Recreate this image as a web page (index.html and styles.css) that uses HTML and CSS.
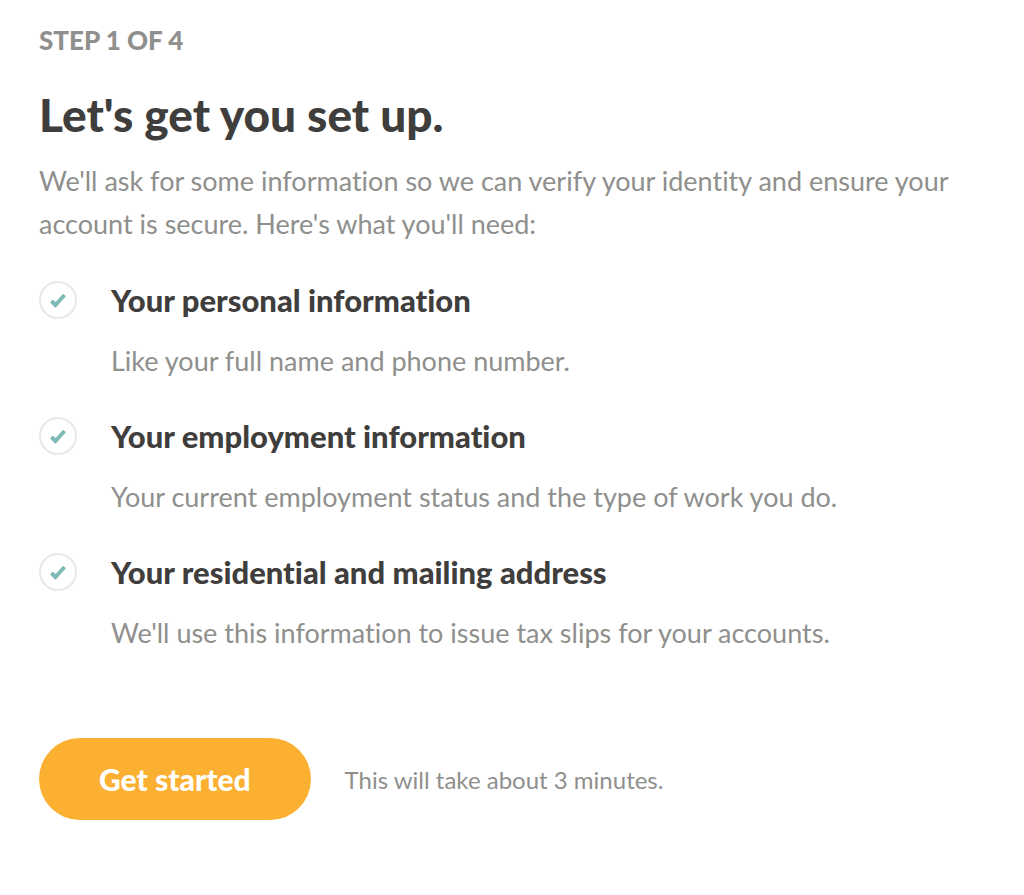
FILE: index.html
```html
<!DOCTYPE html>
<html lang="en">
<head>
  <meta charset="UTF-8">
  <meta name="viewport" content="width=device-width, initial-scale=1.0">
  <title>Account setup</title>
  <link rel="stylesheet" href="styles.css">
</head>
<body>
  <main class="setup">
    <p class="step">STEP 1 OF 4</p>
    <h1>Let's get you set up.</h1>
    <p class="intro">We'll ask for some information so we can verify your identity and ensure your account is secure. Here's what you'll need:</p>

    <ul class="checklist">
      <li>
        <span class="check">
          <svg width="18" height="16" viewBox="0 0 18 16" aria-hidden="true"><path d="M2.5 9 L6.5 13 L15.5 3"/></svg>
        </span>
        <div class="item">
          <h2>Your personal information</h2>
          <p>Like your full name and phone number.</p>
        </div>
      </li>
      <li>
        <span class="check">
          <svg width="18" height="16" viewBox="0 0 18 16" aria-hidden="true"><path d="M2.5 9 L6.5 13 L15.5 3"/></svg>
        </span>
        <div class="item">
          <h2>Your employment information</h2>
          <p>Your current employment status and the type of work you do.</p>
        </div>
      </li>
      <li>
        <span class="check">
          <svg width="18" height="16" viewBox="0 0 18 16" aria-hidden="true"><path d="M2.5 9 L6.5 13 L15.5 3"/></svg>
        </span>
        <div class="item">
          <h2>Your residential and mailing address</h2>
          <p>We'll use this information to issue tax slips for your accounts.</p>
        </div>
      </li>
    </ul>

    <div class="actions">
      <button type="button">Get started</button>
      <span class="note">This will take about 3 minutes.</span>
    </div>
  </main>
</body>
</html>
```
FILE: styles.css
```css
body {
  margin: 0;
  background: #fff;
  color: #8f8f8d;
  font-family: Lato, sans-serif;
  font-size: 27px;
  font-variant-ligatures: none;
  line-height: 43px;
}
h1, h2, p {
  margin: 0;
}
.setup {
  padding: 23px 39px;
}
.step {
  font-size: 26px;
  font-weight: 900;
  line-height: 34px;
}
h1 {
  margin: 29px 0 15px;
  color: #3f3e3d;
  font-size: 46px;
  font-weight: 900;
  line-height: 58px;
}
.checklist {
  list-style: none;
  margin: 36px 0 0;
  padding: 0;
}
.checklist li {
  display: flex;
  gap: 34px;
  margin-bottom: 35px;
}
.check {
  display: flex;
  align-items: center;
  justify-content: center;
  flex: none;
  box-sizing: border-box;
  width: 38px;
  height: 38px;
  border: 2px solid #e8e8e8;
  border-radius: 50%;
}
.check path {
  fill: none;
  stroke: #7fbab9;
  stroke-width: 4;
}
h2 {
  margin-bottom: 20px;
  color: #3f3e3d;
  font-size: 31px;
  font-weight: 900;
  line-height: 38px;
}
.actions {
  display: flex;
  flex-wrap: wrap;
  align-items: center;
  gap: 34px;
  margin-top: 84px;
}
button {
  padding: 20px 60px;
  border: none;
  border-radius: 41px;
  background: #fbb031;
  color: #fff;
  font-family: inherit;
  font-size: 30px;
  font-weight: 900;
  line-height: 42px;
  cursor: pointer;
}
.note {
  font-size: 24px;
}
```
